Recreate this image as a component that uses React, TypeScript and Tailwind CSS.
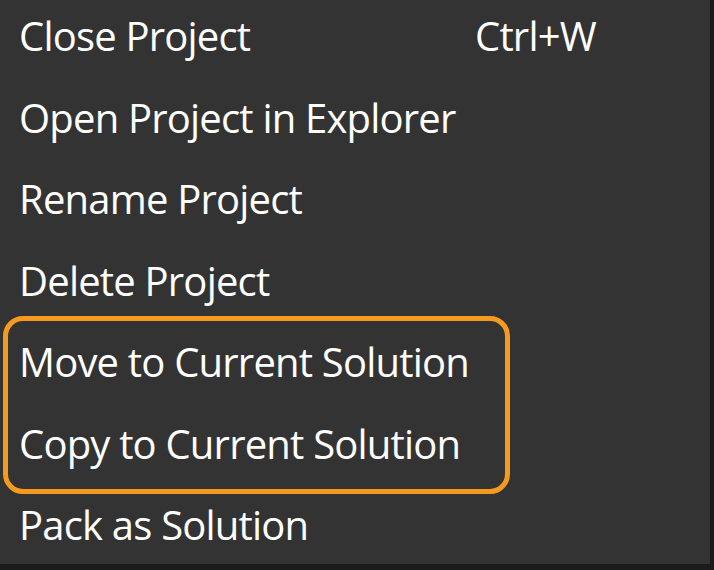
import React from "react";

const Row = ({ label, shortcut, inner }: { label: string; shortcut?: string; inner?: boolean }) => (
  <div className={`flex h-[81.5px] pt-[16px] leading-[40px] ${inner ? "pl-[11px]" : "pl-[19px]"}`}>
    <span className="w-[456px] shrink-0 whitespace-nowrap">{label}</span>
    {shortcut && <span className="whitespace-nowrap">{shortcut}</span>}
  </div>
);

export default function App() {
  return (
    <div
      className="w-[714px] h-[570px] bg-[#333333] border-r-[4px] border-b-[6px] border-[#1b1b1b] text-white text-[40px] tracking-[-0.8px] overflow-hidden box-border"
      style={{ fontFamily: '"Open Sans", "Noto Sans", sans-serif' }}
    >
      <Row label="Close Project" shortcut="Ctrl+W" />
      <Row label="Open Project in Explorer" />
      <Row label="Rename Project" />
      <Row label="Delete Project" />
      <div className="ml-[3px] w-[507px] mt-[-10px] mb-[-5px] pt-[5px] border-[5px] border-[#f59a1f] rounded-[20px]">
        <Row label="Move to Current Solution" inner />
        <Row label="Copy to Current Solution" inner />
      </div>
      <Row label="Pack as Solution" />
    </div>
  );
}
